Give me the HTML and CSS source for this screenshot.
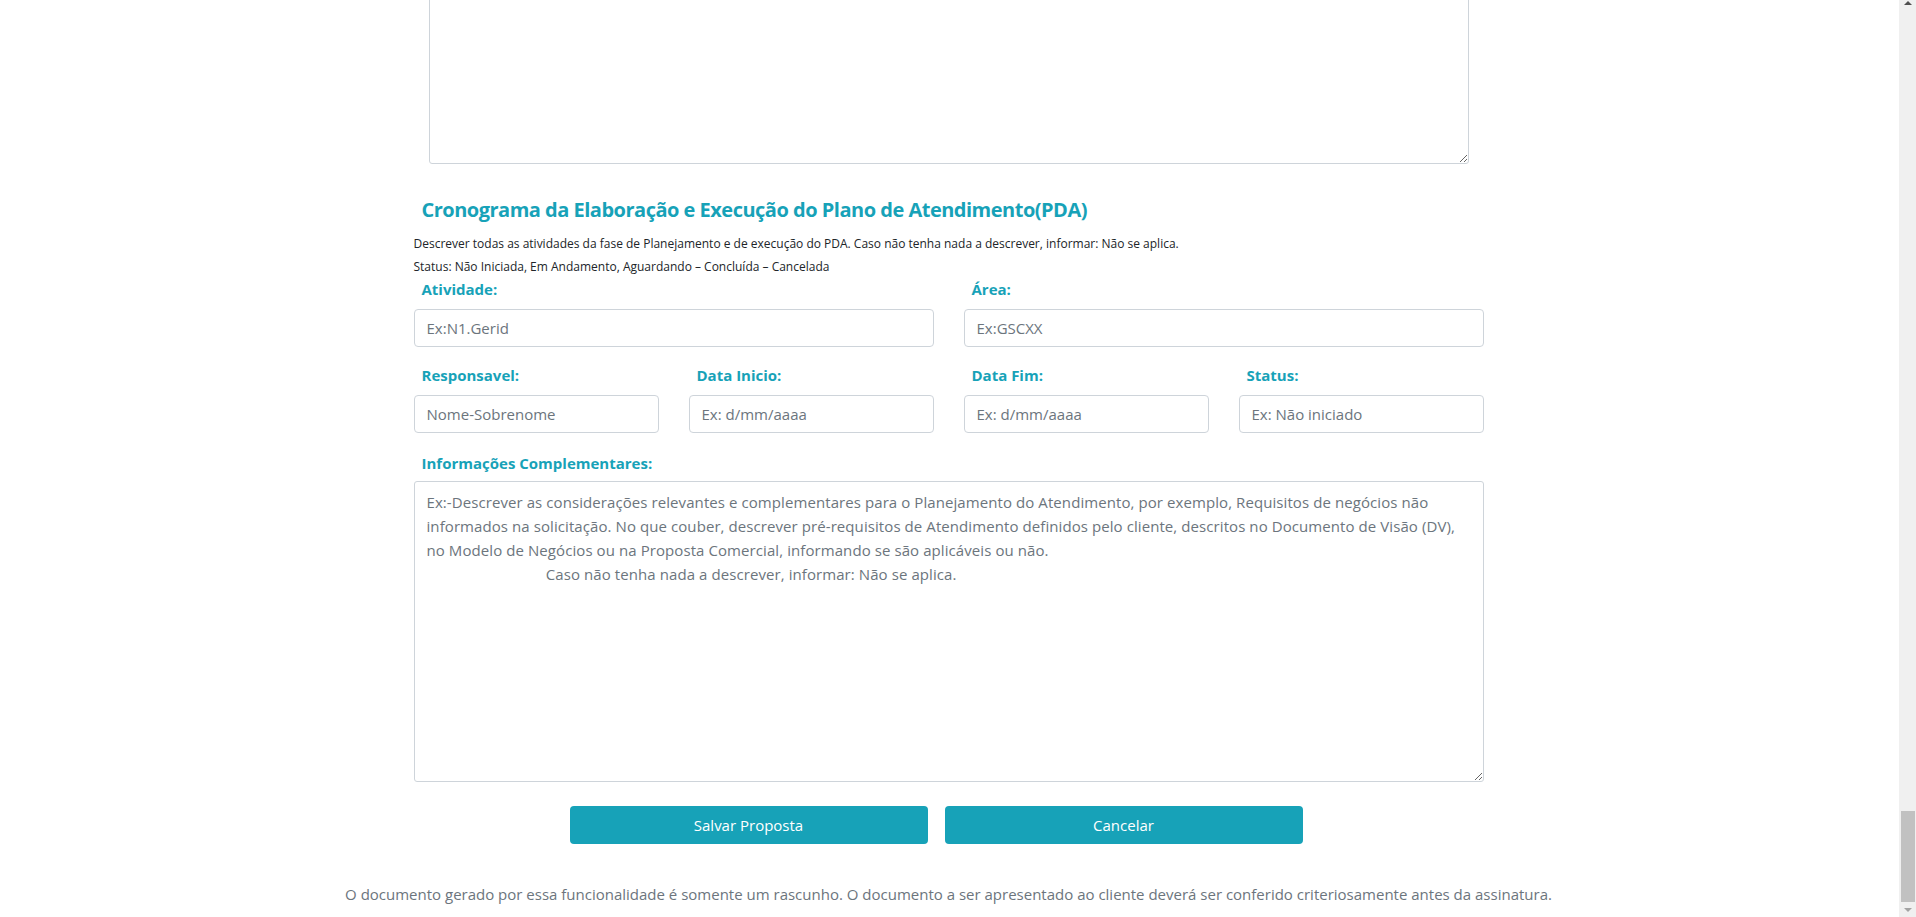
FILE: index.html
```html
<!DOCTYPE html>
<html lang="pt-BR">
<head>
<meta charset="utf-8">
<title>Plano de Atendimento</title>
<link rel="stylesheet" href="styles.css">
</head>
<body>
<div class="screen">
  <main class="page">
    <div class="container">
      <div class="top-area-wrap">
        <textarea class="top-area"></textarea>
      </div>
      <section class="section">
        <h2 class="title">Cronograma da Elaboração e Execução do Plano de Atendimento(PDA)</h2>
        <p class="note">Descrever todas as atividades da fase de Planejamento e de execução do PDA. Caso não tenha nada a descrever, informar: Não se aplica.</p>
        <p class="note">Status: Não Iniciada, Em Andamento, Aguardando – Concluída – Cancelada</p>

        <div class="form-row cols-2">
          <div class="field">
            <label>Atividade:</label>
            <input type="text" placeholder="Ex:N1.Gerid">
          </div>
          <div class="field">
            <label>Área:</label>
            <input type="text" placeholder="Ex:GSCXX">
          </div>
        </div>

        <div class="form-row cols-4">
          <div class="field">
            <label>Responsavel:</label>
            <input type="text" placeholder="Nome-Sobrenome">
          </div>
          <div class="field">
            <label>Data Inicio:</label>
            <input type="text" placeholder="Ex: d/mm/aaaa">
          </div>
          <div class="field">
            <label>Data Fim:</label>
            <input type="text" placeholder="Ex: d/mm/aaaa">
          </div>
          <div class="field">
            <label>Status:</label>
            <input type="text" placeholder="Ex: Não iniciado">
          </div>
        </div>

        <div class="form-row">
          <div class="field">
            <label>Informações Complementares:</label>
            <textarea class="info" placeholder="Ex:-Descrever as considerações relevantes e complementares para o Planejamento do Atendimento, por exemplo, Requisitos de negócios não&#10;informados na solicitação. No que couber, descrever pré-requisitos de Atendimento definidos pelo cliente, descritos no Documento de Visão (DV),&#10;no Modelo de Negócios ou na Proposta Comercial, informando se são aplicáveis ou não.&#10;                              Caso não tenha nada a descrever, informar: Não se aplica."></textarea>
          </div>
        </div>
      </section>

      <div class="actions">
        <button class="btn" type="button">Salvar Proposta</button>
        <button class="btn" type="button">Cancelar</button>
      </div>

      <p class="disclaimer">O documento gerado por essa funcionalidade é somente um rascunho. O documento a ser apresentado ao cliente deverá ser conferido criteriosamente antes da assinatura.</p>
    </div>
  </main>
  <div class="scrollbar">
    <div class="sb-arrow sb-up"></div>
    <div class="sb-track"><div class="sb-thumb"></div></div>
    <div class="sb-arrow sb-down"></div>
  </div>
</div>
</body>
</html>
```

FILE: styles.css
```css
* { box-sizing: border-box; }

html, body {
  margin: 0;
  padding: 0;
  background: #fff;
}

body {
  font-family: "Open Sans", "Noto Sans", sans-serif;
  color: #212529;
}

.screen {
  display: flex;
  height: 917px;
  overflow: hidden;
}

.page {
  flex: 1;
  overflow: hidden;
  background: #fff;
}

.container {
  width: 1100px;
  margin-left: calc(50% - 551px);
}

.top-area-wrap {
  padding: 0 30px;
}

.top-area {
  display: block;
  width: 100%;
  height: 200px;
  margin-top: -36px;
  border: 1px solid #ced4da;
  border-radius: 0 0 3px 3px;
  resize: vertical;
}

.section {
  padding: 0 15px;
}

.title {
  margin: 32px 0 8px 8px;
  font-size: 20px;
  line-height: 28px;
  font-weight: 700;
  letter-spacing: -0.5px;
  color: #17a2b8;
}

.note {
  margin: 0;
  font-size: 12px;
  line-height: 23px;
  color: #212529;
}

.form-row {
  display: grid;
  grid-template-columns: 1fr;
  column-gap: 30px;
  margin-top: 20px;
}

.cols-2 {
  grid-template-columns: repeat(2, 1fr);
  margin-top: 1px;
}

.cols-4 {
  grid-template-columns: repeat(4, 1fr);
  margin-top: 18px;
}

.field {
  display: flex;
  flex-direction: column;
}

.field label {
  padding-left: 8px;
  margin-bottom: 8px;
  font-size: 15px;
  line-height: 20px;
  font-weight: 700;
  color: #17a2b8;
}

.cols-2 .field label,
.cols-4 .field label {
  margin-bottom: 10px;
}

.field input {
  height: 38px;
  padding: 0 12px;
  border: 1px solid #ced4da;
  border-radius: 4px;
  font-family: inherit;
  font-size: 15px;
  color: #495057;
  background: #fff;
}

.field input::placeholder,
.field textarea::placeholder {
  color: #6c757d;
  opacity: 1;
}

.info {
  display: block;
  width: 100%;
  height: 301px;
  padding: 8px 12px;
  border: 1px solid #ced4da;
  border-radius: 3px;
  font-family: inherit;
  font-size: 15px;
  line-height: 24px;
  letter-spacing: 0.08px;
  color: #495057;
  resize: vertical;
}

.actions {
  display: flex;
  gap: 17px;
  margin-top: 24px;
  padding-left: 171px;
}

.btn {
  width: 358px;
  height: 38px;
  border: none;
  border-radius: 4px;
  background: #17a2b8;
  color: #fff;
  font-family: inherit;
  font-size: 15px;
}

.disclaimer {
  margin: 38px -100px 0;
  text-align: center;
  font-size: 15px;
  line-height: 24px;
  color: #6c757d;
}

.scrollbar {
  width: 17px;
  flex: none;
  display: flex;
  flex-direction: column;
  background: #f0f0f0;
}

.sb-arrow {
  height: 17px;
  flex: none;
  display: flex;
  justify-content: center;
}

.sb-up {
  height: 8px;
  align-items: flex-start;
}

.sb-up::before {
  content: "";
  margin-top: 1px;
  border-left: 4px solid transparent;
  border-right: 4px solid transparent;
  border-bottom: 4px solid #505050;
}

.sb-down {
  align-items: center;
  height: 15px;
}

.sb-down::before {
  content: "";
  border-left: 4px solid transparent;
  border-right: 4px solid transparent;
  border-top: 4px solid #a3a3a3;
}

.sb-track {
  flex: 1;
  display: flex;
  flex-direction: column;
  justify-content: flex-end;
  padding: 0 1px 0 2px;
}

.sb-thumb {
  height: 91px;
  background: #c1c1c1;
}
```
